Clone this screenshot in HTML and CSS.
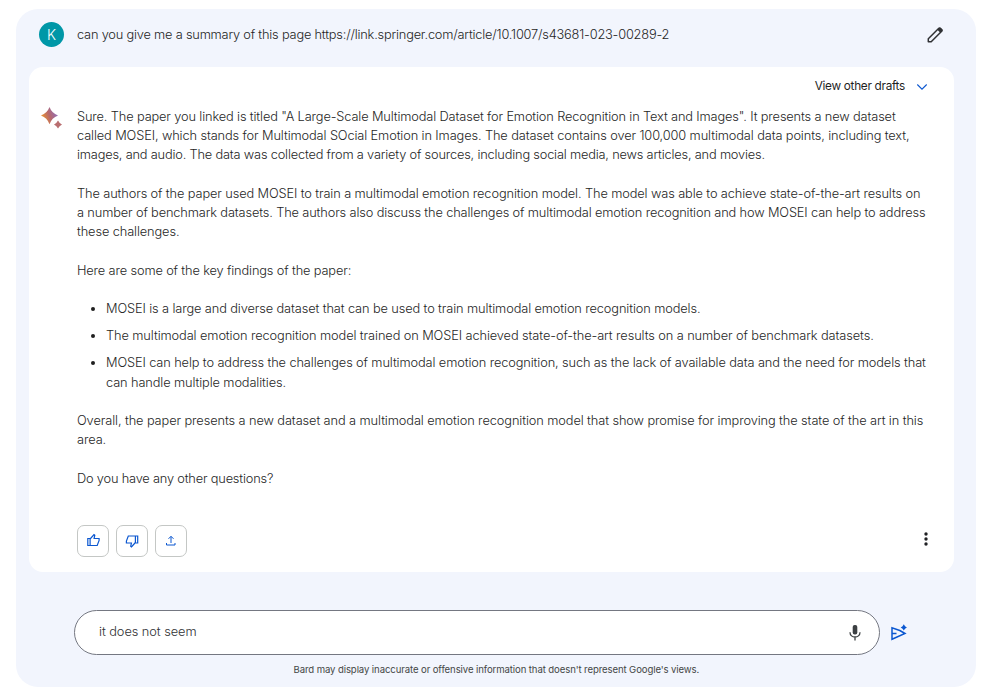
FILE: index.html
```html
<!DOCTYPE html>
<html lang="en">
<head>
<meta charset="utf-8">
<title>Bard</title>
<link rel="stylesheet" href="styles.css">
</head>
<body>
<main class="panel">
  <header class="prompt">
    <span class="avatar">K</span>
    <p class="query">can you give me a summary of this page https://link.springer.com/article/10.1007/s43681-023-00289-2</p>
    <svg class="edit" viewBox="0 0 18 18"><path fill="none" stroke="currentColor" stroke-width="1.500" stroke-linejoin="round" d="M2.300 15.700v-2.900L12.800 2.300q.7-.7 1.400 0l1.500 1.500q.7.700 0 1.400L5.200 15.700z"/><path fill="currentColor" d="M11.300 3.800l1.900-1.900q.9-.7 1.700 0l1.300 1.300q.7.800 0 1.700l-1.900 1.900z"/></svg>
  </header>
  <section class="card">
    <div class="drafts">View other drafts<svg viewBox="0 0 12 8"><path fill="none" stroke="currentColor" stroke-width="1.100" d="M1.300 1.500 6 6.200l4.700-4.700"/></svg></div>
    <div class="answer">
      <svg class="spark" viewBox="0 0 22 22"><defs><linearGradient id="g" x1="0" y1=".7" x2="1" y2=".3"><stop offset="0" stop-color="#f29b28"/><stop offset=".5" stop-color="#b7686c"/><stop offset="1" stop-color="#8c70c4"/></linearGradient></defs><path fill="url(#g)" d="M8.500 0Q10.800 6.200 17 8.500 10.800 10.800 8.500 17.200 6.200 10.800 0 8.500 6.200 6.200 8.500 0z"/><path fill="#b96e70" d="M17 13.400q1.300 2.700 4 4-2.700 1.300-4 4-1.300-2.700-4-4 2.700-1.300 4-4z"/></svg>
      <div class="copy">
        <p><span class="snug">Sure. The paper you linked is titled "A Large-Scale Multimodal Dataset for Emotion Recognition in Text and Images". It presents a new dataset</span><br>called MOSEI, which stands for Multimodal SOcial Emotion in Images. The dataset contains over 100,000 multimodal data points, including text,<br><span class="tight">images, and audio. The data was collected from a variety of sources, including social media, news articles, and movies.</span></p>
        <p>The authors of the paper used MOSEI to train a multimodal emotion recognition model. The model was able to achieve state-of-the-art results on<br><span class="snug">a number of benchmark datasets. The authors also discuss the challenges of multimodal emotion recognition and how MOSEI can help to address</span><br>these challenges.</p>
        <p class="snug">Here are some of the key findings of the paper:</p>
        <ul>
          <li>MOSEI is a large and diverse dataset that can be used to train multimodal emotion recognition models.</li>
          <li class="loose">The multimodal emotion recognition model trained on MOSEI achieved state-of-the-art results on a number of benchmark datasets.</li>
          <li>MOSEI can help to address the challenges of multimodal emotion recognition, such as the lack of available data and the need for models that<br>can handle multiple modalities.</li>
        </ul>
        <p class="loose">Overall, the paper presents a new dataset and a multimodal emotion recognition model that show promise for improving the state of the art in this<br>area.</p>
        <p class="tight">Do you have any other questions?</p>
      </div>
    </div>
    <footer class="actions">
      <button aria-label="Good response"><svg viewBox="0 0 16 16"><path d="M2.800 5.500h2.300v7H2.800zM5.100 6 9 1.500l.8.700-.7 3.300h5v2l-1.900 5H5.100"/></svg></button>
      <button aria-label="Bad response"><svg viewBox="0 0 16 16"><path d="M13.700 10h-2.300V3h2.300zM11.400 9.500 7.500 14l-.8-.7.700-3.300h-5V8l1.900-5h7.100"/></svg></button>
      <button aria-label="Share"><svg class="share" viewBox="0 0 16 16"><path d="M8 10V3.500M5.500 5.800 8 3.300l2.500 2.500M3.500 10v2h8.500v-2"/></svg></button>
      <svg class="more" viewBox="0 0 4 14"><circle cx="2" cy="2" r="1.700"/><circle cx="2" cy="7" r="1.700"/><circle cx="2" cy="12" r="1.700"/></svg>
    </footer>
  </section>
  <div class="composer">
    <div class="field"><span class="draft-text">it does not seem</span><svg class="mic" viewBox="0 0 12 16"><rect x="3.700" y="0" width="4.600" height="9.500" rx="2" fill="currentColor"/><path fill="none" stroke="currentColor" stroke-width="1.300" d="M1 7.200c0 6.400 10 6.400 10 0M6 12v3.500"/></svg></div>
    <svg class="send" viewBox="0 0 18 18"><path fill="none" stroke="currentColor" stroke-width="1.500" d="M9.800 6.500 2 3.700v11.600L15 9.500 9.800 6.500M2 9.500h4.500"/><path fill="currentColor" d="M13.800.3q.9 2.200 3.100 3.100-2.200.9-3.100 3.100-.9-2.200-3.100-3.100 2.200-.9 3.100-3.100z"/></svg>
  </div>
  <p class="notice">Bard may display inaccurate or offensive information that doesn't represent Google's views.</p>
</main>
</body>
</html>
```
FILE: styles.css
```css
* { box-sizing: border-box; }
body { margin: 0; background: #fff; color: #1f1f1f; font: 300 12.8px/19.25px Inter, "Liberation Sans", sans-serif; }
p, ul { margin: 0; }
.panel { width: 960px; height: 678px; margin: 9px 0 0 16px; padding: 0 22px 0 13px; background: #f2f5fd; border-radius: 22px; overflow: hidden; }
.prompt { display: flex; align-items: center; height: 58px; padding: 0 10px 7px; }
.avatar { width: 25px; height: 25px; border-radius: 50%; background: #0097a7; color: #fff; font-size: 14px; line-height: 25px; text-align: center; }
.query { margin-left: 13px; white-space: nowrap; letter-spacing: -.196px; }
.edit { width: 18px; height: 18px; margin-left: auto; color: #303134; }
.card { height: 505px; background: #fff; border-radius: 14px; padding-top: 10px; display: flex; flex-direction: column; }
.drafts { display: flex; align-items: center; justify-content: flex-end; gap: 11px; height: 20px; padding-right: 26px; font-size: 11.800px; font-weight: 400; letter-spacing: -.3px; }
.drafts svg { width: 12px; height: 8px; margin-bottom: 1px; color: #0b57d0; }
.answer { display: flex; padding: 9.900px 0 0 12px; }
.spark { width: 22px; height: 22px; flex: none; }
.copy { margin-left: 14px; display: flex; flex-direction: column; gap: 19.25px; white-space: nowrap; letter-spacing: -.116px; }
.copy ul { padding-left: 29px; display: flex; flex-direction: column; gap: 7.700px; }
.snug { letter-spacing: -.138px; }
.tight { letter-spacing: -.185px; }
.loose { letter-spacing: -.099px; }
.actions { display: flex; align-items: center; gap: 7px; margin: auto 26px 15px 48px; }
.actions button { width: 32px; height: 32px; padding: 0; display: grid; place-items: center; background: #fff; border: 1px solid #c4c7c5; border-radius: 7px; color: #0b57d0; }
.actions button svg { width: 16px; height: 16px; fill: none; stroke: currentColor; stroke-width: 1.200; }
.actions button .share { stroke-width: 1; }
.more { width: 4px; height: 14px; margin: 0 0 4px auto; fill: #202124; }
.composer { display: flex; align-items: center; gap: 10px; margin: 38px 0 0 45px; }
.field { width: 806px; height: 45px; display: flex; align-items: center; justify-content: space-between; padding: 0 18px 0 24px; background: #fff; border: 1px solid #747781; border-radius: 23px; color: #303134; }
.draft-text { padding-bottom: 2px; letter-spacing: -.06px; }
.mic { width: 12px; height: 16px; color: #3c4043; }
.send { width: 18px; height: 18px; color: #0b57d0; }
.notice { margin: 5px 0 0 264.500px; font-size: 9.600px; font-weight: 400; letter-spacing: -.11px; color: #444746; white-space: nowrap; }
```
